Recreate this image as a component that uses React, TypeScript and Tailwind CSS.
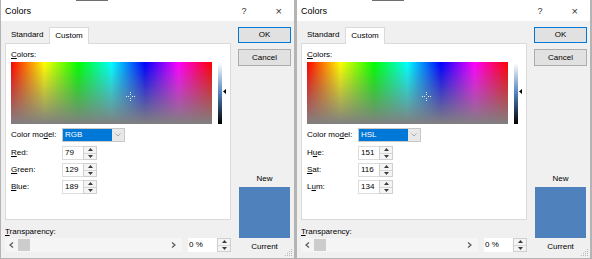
import React from "react";

const font = { fontFamily: '"Liberation Sans", Arial, sans-serif' };

function Up() {
  return (
    <svg width="5" height="3" viewBox="0 0 5 3">
      <path d="M0 3L2.5 0L5 3Z" fill="#3c3c3c" />
    </svg>
  );
}
function Down() {
  return (
    <svg width="5" height="3" viewBox="0 0 5 3">
      <path d="M0 0L2.5 3L5 0Z" fill="#3c3c3c" />
    </svg>
  );
}

function Spinner() {
  return (
    <div className="w-[14px] h-full border border-[#cfcfcf] bg-[#f4f4f4] flex flex-col">
      <div className="flex-1 flex items-center justify-center border-b border-[#d6d6d6]">
        <Up />
      </div>
      <div className="flex-1 flex items-center justify-center">
        <Down />
      </div>
    </div>
  );
}

function ValueRow({ label, value }: { label: React.ReactNode; value: string }) {
  return (
    <div className="flex h-[14px] items-center">
      <div className="w-[51px] text-[8px] leading-[10px]">{label}</div>
      <div className="flex h-[14px]">
        <div className="w-[21px] h-full bg-white border border-[#dcdcdc] border-r-0 text-[8px] leading-[12px] pl-[2px]">
          {value}
        </div>
        <Spinner />
      </div>
    </div>
  );
}

function Dialog({
  model,
  rows,
}: {
  model: string;
  rows: { label: React.ReactNode; value: string }[];
}) {
  return (
    <div
      className="relative w-[296px] h-[259px] flex flex-col border-l border-r-2 border-b border-[#b4b4b4] bg-[#f0f0f0] text-black"
      style={font}
    >
      {/* title bar */}
      <div className="relative h-[21px] bg-white flex items-center pl-[4px] shrink-0">
        <div className="absolute top-0 left-[75px] w-[32px] h-[1px] bg-[#6e6e6e]" />
        <span className="text-[9px] leading-[10px]">Colors</span>
        <span className="ml-auto text-[9px] leading-[10px] text-[#333] mr-[29px]">?</span>
        <span className="text-[11px] leading-[10px] text-[#333] mr-[12px]">×</span>
      </div>
      {/* body */}
      <div className="flex-1 flex pl-[4px] pt-[6px]">
        {/* left column */}
        <div className="w-[226px] flex flex-col">
          {/* tabs */}
          <div className="h-[16px] flex items-end">
            <div className="h-[16px] w-[44px] pl-[6px] text-[8px] leading-[16px]">Standard</div>
            <div className="h-[17px] w-[40px] bg-white border border-b-0 border-[#dadada] text-[8px] leading-[16px] text-center -mb-[1px] relative z-10">
              Custom
            </div>
          </div>
          {/* panel */}
          <div className="h-[177px] bg-white border border-[#dadada] pl-[5px] flex flex-col">
            <div className="mt-[6px] h-[10px] text-[8px] leading-[10px]">
              <u>C</u>olors:
            </div>
            <div className="mt-[2px] flex">
              <div className="relative w-[201px] h-[62px] bg-[linear-gradient(to_right,#ff0000,#ffff00,#00ff00,#00ffff,#0000ff,#ff00ff,#ff0000)]">
                <div className="w-full h-full bg-[linear-gradient(to_bottom,rgba(128,128,128,0),#808080)]" />
                <svg className="absolute left-[115px] top-[30px]" width="9" height="9" viewBox="0 0 9 9">
                  <path d="M4.5 0V3M4.5 6V9M0 4.5H3M6 4.5H9" stroke="#e8e8e8" strokeWidth="1" strokeDasharray="1 1" />
                </svg>
              </div>
              <div className="ml-[6px] mt-[1px] w-[4px] h-[61px] bg-[linear-gradient(to_bottom,#ffffff,#4f81bd_50%,#000000)]" />
              <div className="mt-[27px] ml-[1px]">
                <svg width="3" height="5" viewBox="0 0 3 5">
                  <path d="M0 2.5L3 0V5Z" fill="#000" />
                </svg>
              </div>
            </div>
            <div className="mt-[3px] flex h-[15px] items-center">
              <div className="w-[51px] text-[8px] leading-[10px]">
                Color mo<u>d</u>el:
              </div>
              <div className="flex h-[14px] w-[63px] border border-[#c8c8c8] bg-white">
                <div className="flex-1 bg-[#0078d7] text-white text-[8px] leading-[12px] pl-[2px]">{model}</div>
                <div className="w-[12px] bg-[#e8e8e8] flex items-center justify-center">
                  <svg width="6" height="4" viewBox="0 0 6 4">
                    <path d="M0.5 0.5L3 3L5.5 0.5" stroke="#9a9a9a" fill="none" strokeWidth="0.8" />
                  </svg>
                </div>
              </div>
            </div>
            <div className="mt-[4px] flex flex-col gap-[3px]">
              {rows.map((r, i) => (
                <ValueRow key={i} label={r.label} value={r.value} />
              ))}
            </div>
          </div>
          {/* transparency */}
          <div className="mt-[7px] h-[10px] text-[8px] leading-[10px]">
            <u>T</u>ransparency:
          </div>
          <div className="mt-[1px] flex h-[14px] items-center">
            <div className="w-[178px] h-[14px] bg-[#f5f5f5] flex items-center">
              <svg className="ml-[4px]" width="5" height="6" viewBox="0 0 5 6">
                <path d="M4 0.5L1 3L4 5.5" stroke="#555" fill="none" strokeWidth="1.2" />
              </svg>
              <div className="ml-[4px] w-[12px] h-[12px] bg-[#cdcdcd]" />
              <svg className="ml-auto mr-[6px]" width="5" height="6" viewBox="0 0 5 6">
                <path d="M1 0.5L4 3L1 5.5" stroke="#555" fill="none" strokeWidth="1.2" />
              </svg>
            </div>
            <div className="ml-[6px] flex h-[14px]">
              <div className="w-[29px] h-full bg-white text-[8px] leading-[13px] pl-[1px]">0 %</div>
              <Spinner />
            </div>
          </div>
        </div>
        {/* right column */}
        <div className="ml-[7px] w-[53px] flex flex-col items-center">
          <div className="w-[53px] h-[16px] border border-[#0078d7] bg-[#e1e1e1] text-[8px] leading-[14px] text-center">
            OK
          </div>
          <div className="mt-[6px] w-[53px] h-[17px] border border-[#adadad] bg-[#e1e1e1] text-[8px] leading-[15px] text-center">
            Cancel
          </div>
          <div className="mt-[108px] h-[10px] text-[8px] leading-[10px]">New</div>
          <div className="mt-[3px] w-[51px] h-[51px] bg-[#4f81bd]" />
          <div className="mt-[4px] h-[10px] text-[8px] leading-[10px]">Current</div>
        </div>
      </div>
      <svg className="absolute right-[1px] bottom-[1px]" width="8" height="8" viewBox="0 0 8 8">
        <g fill="#b8b8b8">
          <rect x="6" y="0" width="1" height="1" />
          <rect x="4" y="2" width="1" height="1" />
          <rect x="6" y="2" width="1" height="1" />
          <rect x="2" y="4" width="1" height="1" />
          <rect x="4" y="4" width="1" height="1" />
          <rect x="6" y="4" width="1" height="1" />
          <rect x="0" y="6" width="1" height="1" />
          <rect x="2" y="6" width="1" height="1" />
          <rect x="4" y="6" width="1" height="1" />
          <rect x="6" y="6" width="1" height="1" />
        </g>
      </svg>
    </div>
  );
}

export default function App() {
  return (
    <div className="flex w-[592px] h-[259px] bg-white overflow-hidden">
      <Dialog
        model="RGB"
        rows={[
          { label: <><u>R</u>ed:</>, value: "79" },
          { label: <><u>G</u>reen:</>, value: "129" },
          { label: <><u>B</u>lue:</>, value: "189" },
        ]}
      />
      <Dialog
        model="HSL"
        rows={[
          { label: <>H<u>u</u>e:</>, value: "151" },
          { label: <><u>S</u>at:</>, value: "116" },
          { label: <>L<u>u</u>m:</>, value: "134" },
        ]}
      />
    </div>
  );
}
